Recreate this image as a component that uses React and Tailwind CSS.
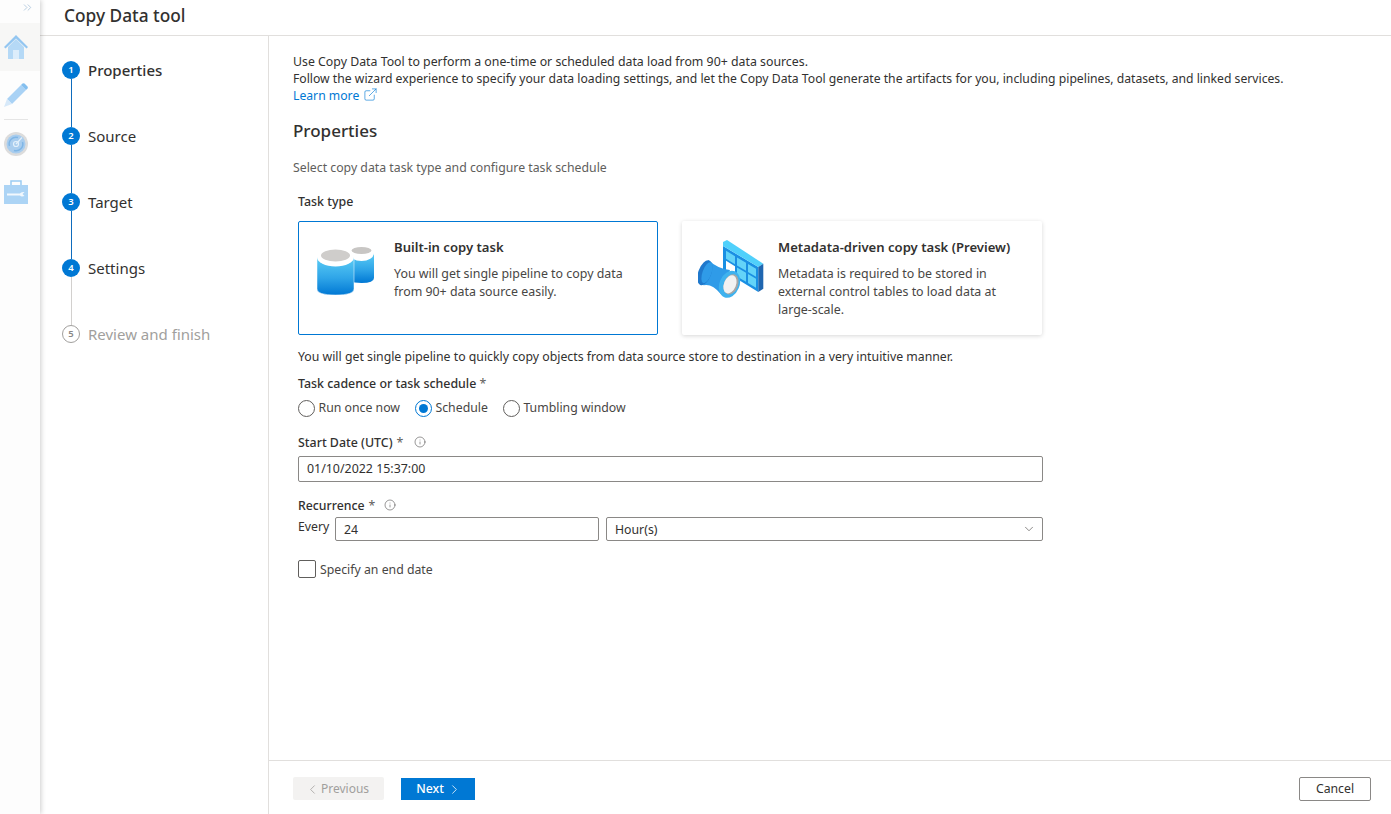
import React from 'react';
import { ChevronDown, ChevronLeft, ChevronRight, ChevronsRight, ExternalLink, Info } from 'lucide-react';

const steps = [
  { n: 1, label: 'Properties', active: true, line: 'bg-[#0f6cbd]' },
  { n: 2, label: 'Source', line: 'bg-[#0f6cbd]' },
  { n: 3, label: 'Target', line: 'bg-[#0f6cbd]' },
  { n: 4, label: 'Settings', line: 'bg-[#d2d0ce]' },
  { n: 5, label: 'Review and finish', disabled: true },
];

const HomeIcon = () => (
  <svg width="24" height="24" viewBox="0 0 24 24">
    <path d="M4 12 L12 4 L20 12 V24 H4 Z" fill="#b5d9f6" />
    <path d="M12 0 L24 12 L22.500 13.500 L12 3.500 L1.500 13.500 L0 12 Z" fill="#93c6f1" />
    <rect x="9" y="15" width="6" height="9" fill="#dcedfb" />
  </svg>
);

const PencilIcon = () => (
  <svg width="24" height="24" viewBox="0 0 24 24">
    <path d="M3 16 L17 2 L22 7 L8 21 Z" fill="#a9d2f5" />
    <path d="M17 2 L18.500 0.500 Q19.500 -0.200 20.500 0.500 L23.500 3.500 Q24.200 4.500 23.500 5.500 L22 7 Z" fill="#84bfef" />
    <path d="M3 16 L8 21 L0 24 Z" fill="#d7e9f9" />
  </svg>
);

const MonitorIcon = () => (
  <svg width="24" height="24" viewBox="0 0 24 24">
    <circle cx="12" cy="12" r="12" fill="#dcdcdc" />
    <circle cx="12" cy="12" r="9.500" fill="#a9cdee" />
    <path d="M5.500 14 A6.800 6.800 0 0 1 14 5.500" fill="none" stroke="#7fb6e6" strokeWidth="1.500" />
    <path d="M18.500 10 A6.800 6.800 0 0 1 10 18.500" fill="none" stroke="#7fb6e6" strokeWidth="1.500" />
    <circle cx="12" cy="12" r="2.500" fill="none" stroke="#e3f0fb" strokeWidth="1.200" />
    <path d="M12 12 L18 5.500" stroke="#e3f0fb" strokeWidth="1.200" />
  </svg>
);

const ToolboxIcon = () => (
  <svg width="24" height="24" viewBox="0 0 24 24">
    <path d="M7 5 V1 H17 V5" fill="none" stroke="#9accf2" strokeWidth="1.500" />
    <rect x="0" y="5" width="24" height="19" fill="#acd4f5" />
    <path d="M3 13.500 H16 Q17 11.500 20.500 12 L18.500 14 L20.500 16 Q17 17 16 15.500 H3 Z" fill="#f2f8fd" />
  </svg>
);

const CylinderIcon = () => (
  <svg width="58" height="51" viewBox="0 0 58 51">
    <defs>
      <linearGradient id="cyl" x1="0" y1="0" x2="0" y2="1">
        <stop offset="0" stopColor="#5ccdf5" />
        <stop offset="0.55" stopColor="#2fa5e8" />
        <stop offset="1" stopColor="#0078d4" />
      </linearGradient>
    </defs>
    <path d="M32 8 H57 V33 Q57 38 44.500 38 Q37 38 32 36 Z" fill="url(#cyl)" />
    <ellipse cx="44.500" cy="8" rx="12.500" ry="8" fill="#ffffff" />
    <ellipse cx="44.500" cy="5.500" rx="10" ry="3.500" fill="#c8c6c4" />
    <path d="M0 12 V44 Q0 50 18.500 50 Q37 50 37 44 V12 Z" fill="url(#cyl)" stroke="#ffffff" strokeWidth="0.500" />
    <ellipse cx="18.500" cy="12" rx="18.500" ry="9.500" fill="#ffffff" />
    <ellipse cx="18.500" cy="10.500" rx="14.500" ry="6" fill="#cfcdcb" />
  </svg>
);

const MetadataIcon = () => (
  <svg width="66" height="60" viewBox="0 0 66 60">
    <path d="M25 7 L60.300 28 V53 L25 31.300 Z" fill="#1a8fe3" />
    <path d="M25 3 L29 1 L65.300 24.700 L60.300 28 L25 7 Z" fill="#50d0fb" />
    <path d="M60.300 28 L65.300 24.700 V49.700 L60.300 53 Z" fill="#1f66b0" />
    <path d="M28 11.800 L37 17.200 V25.200 L28 19.800 Z M39 18.400 L48 23.800 V31.800 L39 26.400 Z M50 25 L58 29.800 V37.800 L50 33 Z M39 28.400 L48 33.800 V42.800 L39 37.400 Z M50 35 L58 39.800 V48.800 L50 44 Z" fill="#63d3f8" />
    <path d="M28 21.800 L37 27.200 V36.200 L28 30.800 Z" fill="#ffffff" />
    <path d="M10.300 21 Q20 30 32 31 L22.700 55 Q14 44 5.300 46.300 Z" fill="#2f9be8" />
    <ellipse cx="6.800" cy="33.700" rx="6.500" ry="13" transform="rotate(20 6.800 33.700)" fill="#1f78cc" />
    <ellipse cx="9" cy="33.700" rx="4.500" ry="11" transform="rotate(20 9 33.700)" fill="#2f9be8" />
    <ellipse cx="31.500" cy="45.300" rx="10" ry="14" transform="rotate(22 31.500 45.300)" fill="#3fb2ee" />
    <ellipse cx="33" cy="45.300" rx="7" ry="10.500" transform="rotate(22 33 45.300)" fill="#a8a6a5" />
    <ellipse cx="32" cy="45.300" rx="6" ry="9.500" transform="rotate(22 32 45.300)" fill="#f2f2f2" />
  </svg>
);

const Radio = ({ label, checked }) => (
  <label className="flex items-center gap-[3.500px]">
    <span className={`w-[17px] h-[17px] rounded-full border flex items-center justify-center ${checked ? 'border-[#0078d4]' : 'border-[#605e5c]'}`}>
      {checked && <span className="w-[9px] h-[9px] rounded-full bg-[#0078d4]" />}
    </span>
    <span className="text-[#484644]">{label}</span>
  </label>
);

const TaskCard = ({ icon, title, lines, selected, iconClass }) => (
  <div className={`w-[360px] h-[114px] flex bg-white rounded-[2px] ${selected ? 'border border-[#0078d4]' : 'shadow-[0_1px_4px_rgba(0,0,0,0.16)]'}`}>
    <div className={iconClass}>{icon}</div>
    <div className={selected ? 'pt-[16px]' : 'pt-[17px]'}>
      <p className="text-[13.100px] font-semibold text-[#323130] leading-[18px]">{title}</p>
      <div className="mt-[9px] text-[12.400px] leading-[18px] text-[#484644]">
        {lines.map((l) => <p key={l}>{l}</p>)}
      </div>
    </div>
  </div>
);

export default function App() {
  return (
    <div className="flex h-[814px] w-[1391px] overflow-hidden bg-white text-[12.290px] text-[#323130] font-['Noto_Sans','Open_Sans',sans-serif]">
      {/* left rail */}
      <div className="w-[40px] shrink-0 bg-[#fdfdfd] shadow-[1px_0_5px_rgba(0,0,0,0.2)] z-10 flex flex-col">
        <div className="h-[23px] flex justify-end pr-[6px] pt-[1px]">
          <ChevronsRight size={13} strokeWidth={1} className="text-[#7fa6c9]" />
        </div>
        <div className="h-[48px] bg-[#f7f7f6] pl-[4px] flex items-center"><HomeIcon /></div>
        <div className="h-[48px] pl-[4px] flex items-center"><PencilIcon /></div>
        <div className="ml-[4px] w-[24px] border-t border-[#e5e5e5]" />
        <div className="h-[48px] pl-[4px] flex items-center"><MonitorIcon /></div>
        <div className="h-[48px] pl-[4px] flex items-center"><ToolboxIcon /></div>
      </div>

      <div className="flex-1 flex flex-col min-w-0">
        {/* header */}
        <div className="h-[36px] shrink-0 border-b border-[#e1dfdd] pl-[24px] flex items-center">
          <h1 className="text-[17.300px] font-medium text-[#323130] -mt-[4px]">Copy Data tool</h1>
        </div>

        <div className="flex-1 flex min-h-0">
          {/* stepper */}
          <div className="w-[229px] shrink-0 border-r border-[#e1dfdd] pl-[22px] pt-[25px]">
            {steps.map((s) => (
              <div key={s.n} className="flex gap-[8px] h-[66px]">
                <div className="w-[18px] flex flex-col items-center">
                  <span className={`w-[18px] h-[18px] shrink-0 rounded-full flex items-center justify-center text-[9.500px] font-semibold ${s.disabled ? 'border border-[#a19f9d] text-[#8a8886]' : 'bg-[#0078d4] text-white'}`}>
                    {s.n}
                  </span>
                  {s.line && <span className={`w-px flex-1 ${s.line}`} />}
                </div>
                <span className={`text-[15px] leading-[20px] -mt-px ${s.active ? 'font-medium text-[#323130]' : s.disabled ? 'text-[#a19f9d]' : 'text-[#323130]'}`}>
                  {s.label}
                </span>
              </div>
            ))}
          </div>

          {/* main column */}
          <div className="flex-1 flex flex-col min-w-0">
            <div className="flex-1 pl-[24px] pt-[17px]">
              <p className="text-[12.330px] leading-[17px]">Use Copy Data Tool to perform a one-time or scheduled data load from 90+ data sources.</p>
              <p className="text-[12.200px] leading-[17px] whitespace-nowrap">Follow the wizard experience to specify your data loading settings, and let the Copy Data Tool generate the artifacts for you, including pipelines, datasets, and linked services.</p>
              <a className="flex items-center gap-[4px] text-[12.200px] leading-[17px] text-[#0078d4]">
                Learn more <ExternalLink size={15} strokeWidth={1} className="-mt-[3px]" />
              </a>

              <h2 className="mt-[16px] text-[17px] font-medium leading-[22px] text-[#323130]">Properties</h2>
              <p className="mt-[17px] leading-[18px] text-[#605e5c]">Select copy data task type and configure task schedule</p>

              <div className="pl-[5px]">
                <p className="mt-[16px] text-[12.400px] font-medium leading-[18px]">Task type</p>
                <div className="mt-[10px] flex gap-[24px]">
                  <TaskCard
                    selected
                    icon={<CylinderIcon />}
                    iconClass="w-[95px] pl-[18px] pt-[23px]"
                    title="Built-in copy task"
                    lines={['You will get single pipeline to copy data', 'from 90+ data source easily.']}
                  />
                  <TaskCard
                    icon={<MetadataIcon />}
                    iconClass="w-[96px] pl-[16px] pt-[18px]"
                    title="Metadata-driven copy task (Preview)"
                    lines={['Metadata is required to be stored in', 'external control tables to load data at', 'large-scale.']}
                  />
                </div>

                <p className="mt-[13px] leading-[18px]">You will get single pipeline to quickly copy objects from data source store to destination in a very intuitive manner.</p>

                <p className="mt-[9px] text-[12.400px] leading-[18px] font-medium">Task cadence or task schedule <span className="font-normal text-[#605e5c]">*</span></p>
                <div className="mt-[6px] flex gap-[15px] leading-[18px]">
                  <Radio label="Run once now" />
                  <Radio label="Schedule" checked />
                  <Radio label="Tumbling window" />
                </div>

                <div className="mt-[17px] flex items-center text-[12.400px] leading-[18px]">
                  <span className="font-medium">Start Date (UTC)</span>
                  <span className="ml-[4px] text-[#605e5c]">*</span>
                  <Info size={12} strokeWidth={1} className="ml-[11px] -mt-[3px] text-[#323130]" />
                </div>
                <div className="mt-[4px] w-[745px] h-[26px] border border-[#8a8886] rounded-[2px] pl-[8px] flex items-center text-[12.400px]">01/10/2022 15:37:00</div>

                <div className="mt-[15px] flex items-center leading-[18px]">
                  <span className="font-medium">Recurrence</span>
                  <span className="ml-[4px] text-[#605e5c]">*</span>
                  <Info size={12} strokeWidth={1} className="ml-[9px] -mt-[3px] text-[#323130]" />
                </div>
                <div className="mt-[2px] flex items-start">
                  <span className="w-[37px] pt-px leading-[18px]">Every</span>
                  <div className="w-[264px] h-[24px] border border-[#8a8886] rounded-[2px] pl-[8px] pt-[2px] flex items-center">24</div>
                  <div className="ml-[7px] w-[437px] h-[24px] border border-[#8a8886] rounded-[2px] pl-[8px] pr-[6px] flex items-center justify-between">
                    <span className="pt-[2px]">Hour(s)</span>
                    <ChevronDown size={14} strokeWidth={1.25} className="text-[#605e5c]" />
                  </div>
                </div>

                <label className="mt-[17px] flex items-center gap-[4px]">
                  <span className="w-[18px] h-[18px] border border-[#605e5c] rounded-[2px]" />
                  <span className="pt-[3px] leading-[18px] text-[#484644]">Specify an end date</span>
                </label>
              </div>
            </div>

            {/* footer */}
            <div className="h-[54px] shrink-0 border-t border-[#e1dfdd] pl-[24px] pr-[20px] pt-[2px] flex items-center">
              <button className="w-[91px] h-[23px] pt-px rounded-[2px] bg-[#f3f2f1] text-[12px] text-[#a19f9d] flex items-center justify-center gap-[1px] pr-[3px]">
                <ChevronLeft size={15} strokeWidth={1.25} /> Previous
              </button>
              <button className="ml-[17px] w-[74px] h-[22px] pt-px pl-[2px] bg-[#0078d4] text-white font-medium flex items-center justify-center gap-[3px]">
                Next <ChevronRight size={15} strokeWidth={1.25} />
              </button>
              <button className="ml-auto w-[72px] h-[24px] pt-[2px] border border-[#8a8886] rounded-[2px] text-[#323130]">Cancel</button>
            </div>
          </div>
        </div>
      </div>
    </div>
  );
}
